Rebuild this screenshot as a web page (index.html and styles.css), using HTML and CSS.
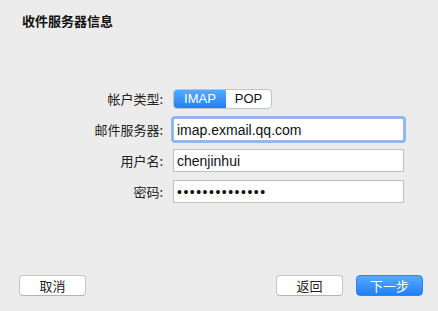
FILE: index.html
```html
<!DOCTYPE html>
<html>
<head>
    <title>收件服务器信息</title>
    <link rel="stylesheet" href="styles.css">
</head>
<body>
    <div class="sheet">
        <h1 class="title">收件服务器信息</h1>

        <div class="form-grid">
            <label class="field-label">帐户类型:</label>
            <div class="segmented">
                <span class="segment active">IMAP</span>
                <span class="segment">POP</span>
            </div>

            <label class="field-label" for="server">邮件服务器:</label>
            <div class="input-wrap focused">
                <input type="text" id="server" value="imap.exmail.qq.com">
            </div>

            <label class="field-label" for="user">用户名:</label>
            <div class="input-wrap">
                <input type="text" id="user" value="chenjinhui">
            </div>

            <label class="field-label" for="pass">密码:</label>
            <div class="input-wrap">
                <input type="password" id="pass" class="password" value="12345678901234">
            </div>
        </div>

        <div class="footer">
            <button class="btn">取消</button>
            <div class="spacer"></div>
            <button class="btn">返回</button>
            <button class="btn primary">下一步</button>
        </div>
    </div>
</body>
</html>
```

FILE: styles.css
```css
html, body {
    margin: 0;
    padding: 0;
    background-color: #ececec;
}

body {
    font-family: "Liberation Sans", "Noto Sans CJK SC", sans-serif;
    font-size: 13px;
    color: #222;
}

.sheet {
    height: 311px;
    display: flex;
    flex-direction: column;
}

.title {
    margin: 0;
    padding: 13px 0 0 22px;
    font-size: 13px;
    font-weight: bold;
    line-height: 17px;
    color: #111;
}

.form-grid {
    display: grid;
    grid-template-columns: 163px 231px;
    grid-auto-rows: 31px;
    column-gap: 10px;
    align-items: center;
    margin-top: 53px;
}

.field-label {
    text-align: right;
    font-family: "Noto Sans CJK SC", "Liberation Sans", sans-serif;
    font-size: 13px;
    color: #222;
}

.segmented {
    display: flex;
    width: 99px;
    height: 20px;
    border: 1px solid #c3c3c3;
    border-radius: 4px;
    background: #fff;
    overflow: hidden;
    box-sizing: border-box;
}

.segment {
    display: flex;
    align-items: center;
    justify-content: center;
    font-size: 13px;
    color: #111;
    width: 46px;
}

.segment.active {
    width: 53px;
    color: #fff;
    background: linear-gradient(#5aa8fc, #1f81f6);
}

.input-wrap {
    height: 23px;
    border: 1px solid #bfbfbf;
    background: #fff;
    box-sizing: border-box;
}

.input-wrap.focused {
    border-color: #9bb8e6;
    border-radius: 2px;
    box-shadow: 0 0 0 2px #8fb6ee;
}

.input-wrap input {
    width: 100%;
    height: 100%;
    border: none;
    outline: none;
    padding: 0 3px;
    box-sizing: border-box;
    background: transparent;
    font-family: "Liberation Sans", sans-serif;
    font-size: 14px;
    color: #111;
}

.input-wrap input.password {
    letter-spacing: 1.5px;
}

.footer {
    margin-top: auto;
    display: flex;
    align-items: center;
    gap: 13px;
    padding: 0 15px 15px 19px;
}

.spacer {
    flex: 1;
}

.btn {
    width: 67px;
    height: 21px;
    padding: 0;
    border: 1px solid #c6c6c6;
    border-bottom-color: #b4b4b4;
    border-radius: 4px;
    background: #fff;
    font-family: "Noto Sans CJK SC", "Liberation Sans", sans-serif;
    font-size: 13px;
    color: #222;
    box-sizing: border-box;
}

.btn.primary {
    border-color: #2a86f5;
    color: #fff;
    background: linear-gradient(#5aa8fc, #1f81f6);
}
```
